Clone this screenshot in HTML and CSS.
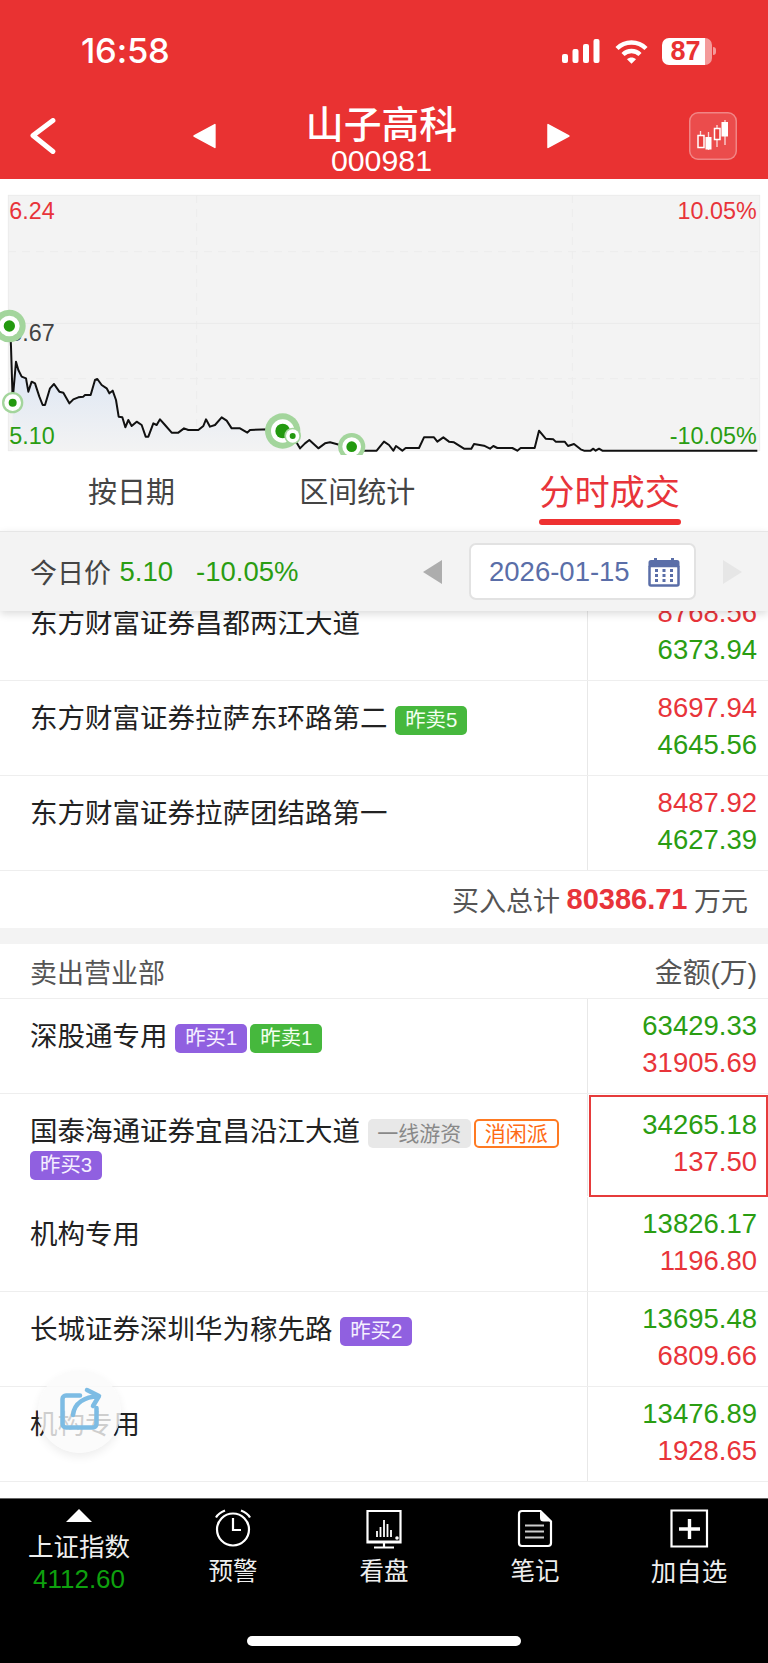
FILE: index.html
```html
<!DOCTYPE html>
<html lang="zh-CN">
<head>
<meta charset="utf-8">
<title>山子高科</title>
<link rel="stylesheet" href="styles.css">
</head>
<body>
<div class="page">
  <header class="header">
    <div class="status">
      <span class="time">16:58</span>
      <div class="status-icons">
        <svg class="signal" width="38" height="24" viewBox="0 0 38 24"><rect x="0" y="15" width="6" height="9" rx="2"/><rect x="10.5" y="10" width="6" height="14" rx="2"/><rect x="21" y="5" width="6" height="19" rx="2"/><rect x="31.5" y="0" width="6" height="24" rx="2"/></svg>
        <svg class="wifi" width="33" height="25" viewBox="0 0 33 25"><path d="M2 9.5C10 1.5 23 1.5 31 9.5" /><path d="M8 15.5C12.800 10.800 20.200 10.800 25 15.500"/><path class="wifi-dot" d="M12 20.300C14.500 17.800 18.500 17.800 21 20.300L16.500 24.800Z"/></svg>
        <div class="battery"><span>87</span></div>
        <i class="battery-nub"></i>
      </div>
    </div>
    <nav class="nav">
      <svg class="back" width="26" height="36" viewBox="0 0 26 36"><path d="M23 2.500L3 17.500 23 33.500"/></svg>
      <svg class="tri tri-left" width="23" height="26" viewBox="0 0 23 26"><path d="M22 1.500V24.500L1 13Z"/></svg>
      <div class="title-block">
        <div class="title">山子高科</div>
        <div class="code">000981</div>
      </div>
      <svg class="tri tri-right" width="23" height="26" viewBox="0 0 23 26"><path d="M1 1.500V24.500L22 13Z"/></svg>
      <div class="kline-btn">
        <svg width="48" height="46" viewBox="0 0 48 46"><path class="wick" d="M11.500 19V36M19.500 20V38M28 13V35M36 8V33"/><rect class="hollow" x="9" y="23.500" width="6" height="12"/><rect class="solid" x="16.500" y="25" width="6" height="12.500"/><rect class="hollow" x="25.500" y="16.500" width="5.500" height="11"/><rect class="solid" x="32.500" y="10" width="6.500" height="14.500"/></svg>
      </div>
    </nav>
  </header>

  <section class="chart">
    <svg width="768" height="276" viewBox="0 -3 2304 828">
      <defs>
        <linearGradient id="fade" x1="0" y1="540" x2="0" y2="812" gradientUnits="userSpaceOnUse">
          <stop offset="0" stop-color="#dbe5f4"/>
          <stop offset="1" stop-color="#f3f3f3"/>
        </linearGradient>
        <clipPath id="clip"><rect x="0" y="-3" width="2304" height="828"/></clipPath>
      </defs>
      <rect class="plot" x="25" y="46" width="2254" height="766"/>
      <path class="grid-dash" d="M24 215H2279M24 596H2279M590 45V812M1717 45V812"/>
      <path class="grid-solid" d="M24 430H2279"/>
      <path class="area" d="M38 812L38 660 48 545 55 570 65 590 78 595 85 635 95 605 105 610 118 650 128 675 135 675 150 625 162 612 178 635 190 638 208 670 220 658 235 652 250 650 255 645 272 645 285 600 292 597 305 615 320 625 328 640 338 632 348 660 356 710 367 712 376 742 385 720 395 738 410 725 425 735 437 770 445 770 460 730 470 735 480 718 495 735 515 758 535 758 552 745 565 750 595 750 610 738 618 718 630 740 645 735 665 712 680 722 695 745 720 745 742 758 750 750 810 748 850 755 878 768 900 805 915 790 928 780 955 805 975 790 990 787 1020 795 1055 800 1085 812Z"/>
      <path class="price" d="M30 440L33 500 38 660 48 545 55 570 65 590 78 595 85 635 95 605 105 610 118 650 128 675 135 675 150 625 162 612 178 635 190 638 208 670 220 658 235 652 250 650 255 645 272 645 285 600 292 597 305 615 320 625 328 640 338 632 348 660 356 710 367 712 376 742 385 720 395 738 410 725 425 735 437 770 445 770 460 730 470 735 480 718 495 735 515 758 535 758 552 745 565 750 595 750 610 738 618 718 630 740 645 735 665 712 680 722 695 745 720 745 742 758 750 750 810 748 850 755 878 768 900 805 915 790 928 780 955 805 975 790 990 787 1020 795 1055 800 1085 812 1130 812 1152 785 1167 795 1180 812 1188 798 1207 812 1217 804 1257 804 1272 772 1302 772 1312 785 1330 772 1347 785 1362 787 1392 806 1414 806 1422 792 1452 797 1470 806 1480 798 1492 804 1537 804 1552 812 1562 804 1604 804 1617 752 1637 776 1660 778 1667 785 1694 785 1704 798 1722 792 1742 808 1752 812 1772 812 1780 806 1787 812 1797 806 1807 812 2272 812"/>
      <text class="lbl red" x="28" y="117">6.24</text>
      <text class="lbl red end" x="2270" y="117">10.05%</text>
      <text class="lbl dark" x="28" y="483">5.67</text>
      <text class="lbl green" x="28" y="793">5.10</text>
      <text class="lbl green end" x="2270" y="793">-10.05%</text>
      <g clip-path="url(#clip)">
        <circle class="halo" cx="28" cy="438" r="49"/><circle class="ring" cx="28" cy="438" r="31"/><circle class="core" cx="28" cy="438" r="17"/>
        <circle class="halo" cx="38" cy="668" r="32"/><circle class="ring" cx="38" cy="668" r="25"/><circle class="core" cx="38" cy="668" r="12"/>
        <circle class="halo" cx="848" cy="753" r="53"/><circle class="ring" cx="848" cy="753" r="35"/><circle class="core" cx="848" cy="753" r="22"/>
        <circle class="halo" cx="878" cy="768" r="25"/><circle class="ring" cx="878" cy="768" r="20"/><circle class="core" cx="878" cy="768" r="9"/>
        <circle class="halo" cx="1055" cy="800" r="41"/><circle class="ring" cx="1055" cy="800" r="28"/><circle class="core" cx="1055" cy="800" r="16"/>
      </g>
    </svg>
  </section>

  <div class="tabs">
    <span class="tab">按日期</span>
    <span class="tab">区间统计</span>
    <span class="tab active">分时成交</span>
  </div>

  <div class="subbar">
    <span class="sub-label">今日价</span>
    <span class="sub-price green-t">5.10</span>
    <span class="sub-pct green-t">-10.05%</span>
    <svg class="arrow-prev" width="21" height="26" viewBox="0 0 21 26"><path d="M20 1V25L1 13Z"/></svg>
    <div class="date-box">
      <span>2026-01-15</span>
      <svg width="32" height="30" viewBox="0 0 32 30"><path class="cal-fill" d="M3 3H6V1H9V3H23V1H26V3H29A2.500 2.500 0 0 1 31.500 5.500V10H.5V5.500A2.500 2.500 0 0 1 3 3Z"/><rect class="cal-body" x="1.500" y="9" width="29" height="19.500" rx="1.500"/><path class="cal-dots" d="M7 13.500H10M14.500 13.500H17.500M22 13.500H25M7 18.500H10M14.500 18.500H17.500M22 18.500H25M7 23.500H10M14.500 23.500H17.500M22 23.500H25"/></svg>
    </div>
    <svg class="arrow-next" width="21" height="26" viewBox="0 0 21 26"><path d="M1 1V25L20 13Z"/></svg>
  </div>

  <main class="list">
    <div class="list-inner">
      <div class="row"><div class="name">东方财富证券昌都两江大道</div><div class="amt"><span class="red-t">8768.56</span><span class="green-t">6373.94</span></div></div>
      <div class="row"><div class="name">东方财富证券拉萨东环路第二 <span class="tag t-green">昨卖5</span></div><div class="amt"><span class="red-t">8697.94</span><span class="green-t">4645.56</span></div></div>
      <div class="row"><div class="name">东方财富证券拉萨团结路第一</div><div class="amt"><span class="red-t">8487.92</span><span class="green-t">4627.39</span></div></div>
      <div class="total">买入总计 <b>80386.71</b> 万元</div>
      <div class="band"></div>
      <div class="head"><span>卖出营业部</span><span class="head-amt">金额(万)</span></div>
      <div class="row"><div class="name">深股通专用 <span class="tag t-purple">昨买1</span><span class="tag t-green">昨卖1</span></div><div class="amt"><span class="green-t">63429.33</span><span class="red-t">31905.69</span></div></div>
      <div class="row row-tall"><div class="name">国泰海通证券宜昌沿江大道 <span class="tag t-gray">一线游资</span><span class="tag t-orange">消闲派</span><span class="tag t-purple">昨买3</span></div><div class="amt hl"><span class="green-t">34265.18</span><span class="red-t">137.50</span></div></div>
      <div class="row"><div class="name">机构专用</div><div class="amt"><span class="green-t">13826.17</span><span class="red-t">1196.80</span></div></div>
      <div class="row"><div class="name">长城证券深圳华为稼先路 <span class="tag t-purple">昨买2</span></div><div class="amt"><span class="green-t">13695.48</span><span class="red-t">6809.66</span></div></div>
      <div class="row"><div class="name">机构专用</div><div class="amt"><span class="green-t">13476.89</span><span class="red-t">1928.65</span></div></div>
    </div>
  </main>

  <div class="fab">
    <svg width="83" height="83" viewBox="0 0 83 83"><path d="M42 25.500H28A3.500 3.500 0 0 0 24.500 29V54A3.500 3.500 0 0 0 28 57.500H55A3.500 3.500 0 0 0 58.500 54V38"/><path d="M35 45C36 33 47 26.500 60 26.500M49 20L61 26 55 36"/></svg>
  </div>

  <footer class="tabbar">
    <div class="tabgrid">
      <div class="tb-item">
        <svg class="index-tri" width="26" height="13" viewBox="0 0 26 13"><path d="M13 0L26 13H0Z"/></svg>
        <div class="index-name">上证指数</div>
        <div class="index-val">4112.60</div>
      </div>
      <div class="tb-item">
        <svg class="tb-icon" width="40" height="40" viewBox="0 0 40 40"><circle cx="20" cy="20.500" r="16"/><path d="M20 9V21H28M3 8.500C5 5 8 3 12 1.500M28 1.500C32 3 35 5 37 8.500"/></svg>
        <div class="tb-label">预警</div>
      </div>
      <div class="tb-item">
        <svg class="tb-icon" width="40" height="40" viewBox="0 0 40 40"><path d="M3.500 2H36.500V33.500H3.500Z"/><path d="M3.500 32.500H36.500M20 34V38M10 38.500H30"/><path class="thin" d="M13 28V22M16.500 28V18M20 28V11M23.500 28V15M27 28V21"/><circle class="fill" cx="33" cy="29" r="1.800"/></svg>
        <div class="tb-label">看盘</div>
      </div>
      <div class="tb-item">
        <svg class="tb-icon" width="40" height="40" viewBox="0 0 40 40"><path d="M7 2H25.500L36 12.500V34A3 3 0 0 1 33 37H7A3 3 0 0 1 4 34V5A3 3 0 0 1 7 2Z"/><path class="fill" d="M25 2.500V9A3.500 3.500 0 0 0 28.500 12.500H35.500Z"/><path class="thin2" d="M10 16.500H29M10 22.500H29M10 28.500H29"/></svg>
        <div class="tb-label">笔记</div>
      </div>
      <div class="tb-item">
        <svg class="tb-icon" width="40" height="40" viewBox="0 0 40 40"><path d="M2.500 1.500H38V37.500H2.500Z"/><path class="plus" d="M20.500 10V30M10 20H31"/></svg>
        <div class="tb-label tb-wide">加自选</div>
      </div>
    </div>
    <div class="home"></div>
  </footer>
</div>
</body>
</html>
```
FILE: styles.css
```css
* { box-sizing: border-box; }
html, body { margin: 0; padding: 0; }
body { background: #fff; font-family: "Liberation Sans", "Noto Sans CJK SC", sans-serif; color: #222; }
.page { position: relative; width: 768px; height: 1663px; overflow: hidden; display: flex; flex-direction: column; }

.header { background: #e93232; height: 179px; flex: none; color: #fff; }
.status { height: 100px; padding: 37px 52px 0 81px; display: flex; justify-content: space-between; align-items: flex-start; }
.time { font-family: Inter, "Liberation Sans", sans-serif; font-size: 34.500px; font-weight: 500; line-height: 28px; letter-spacing: -.2px; }
.status-icons { display: flex; align-items: center; height: 28px; }
.signal { fill: #fff; display: block; }
.wifi { margin-left: 15px; display: block; }
.wifi path { fill: none; stroke: #fff; stroke-width: 4.400; }
.wifi .wifi-dot { fill: #fff; stroke: none; }
.battery { margin-left: 14px; width: 50px; height: 27px; border-radius: 7px; background: linear-gradient(90deg, #fff 0, #fff 86%, #f49a9a 86%, #f49a9a 100%); color: #e93232; font-size: 27px; font-weight: 700; line-height: 27px; text-align: center; padding-right: 3px; }
.battery-nub { display: block; width: 3px; height: 8px; margin-left: 1px; background: #f49a9a; border-radius: 0 3px 3px 0; }

.nav { height: 79px; padding: 0 31px 8px 30px; display: flex; align-items: center; }
.back { fill: none; stroke: #fff; stroke-width: 5; stroke-linecap: round; stroke-linejoin: round; display: block; }
.tri { fill: #fff; stroke: #fff; stroke-width: 1.500; stroke-linejoin: round; display: block; }
.tri-left { margin-left: 137px; }
.title-block { align-self: flex-start; width: 156px; margin-left: 88px; text-align: center; }
.title { font-size: 37.800px; font-weight: 500; line-height: 50px; white-space: nowrap; }
.code { font-size: 30.300px; line-height: 22px; white-space: nowrap; }
.tri-right { margin-left: 88px; }
.kline-btn { margin-left: 119px; width: 48px; height: 48px; border-radius: 9px; background: rgba(255,255,255,.13); box-shadow: inset 0 0 0 1.500px rgba(255,255,255,.32); }
.kline-btn svg { display: block; }
.kline-btn .wick { stroke: #fff; stroke-width: 1.300; fill: none; opacity: .8; }
.kline-btn .hollow { fill: #e9403f; stroke: #fff; stroke-width: 1.500; }
.kline-btn .solid { fill: #fff; }

.chart { height: 276px; flex: none; background: #fff; }
.chart svg { display: block; }
.plot { fill: #f3f3f3; stroke: #ebebeb; stroke-width: 3; }
.grid-dash { fill: none; stroke: #ececec; stroke-width: 3; stroke-dasharray: 24 18; }
.grid-solid { fill: none; stroke: #eaeaea; stroke-width: 3; }
.area { fill: url(#fade); }
.price { fill: none; stroke: #111; stroke-width: 6; stroke-linejoin: round; }
.lbl { font-size: 70px; font-family: "Liberation Sans", sans-serif; }
.lbl.red { fill: #e8343a; }
.lbl.green { fill: #2a9d12; }
.lbl.dark { fill: #444; }
.lbl.end { text-anchor: end; }
.halo { fill: #a3d59c; }
.ring { fill: #fff; }
.core { fill: #23990f; }

.tabs { height: 76px; flex: none; padding: 0 88px; display: flex; justify-content: space-between; align-items: center; background: #fff; }
.tab { font-size: 29px; color: #444; line-height: 40px; white-space: nowrap; }
.tab.active { position: relative; font-size: 35.200px; color: #e8343a; }
.tab.active::after { content: ""; position: absolute; left: 0; right: -1px; top: 46px; height: 6px; border-radius: 3px; background: #ee3030; }

.subbar { position: relative; z-index: 2; height: 80px; flex: none; padding: 0 25px 0 30px; display: flex; align-items: center; background: #f3f3f3; border-top: 1px solid #e6e6e6; box-shadow: 0 3px 8px rgba(0,0,0,.14); font-size: 27.500px; }
.sub-label { color: #444; font-size: 27px; }
.sub-price { margin-left: 8.500px; }
.sub-pct { margin-left: 23px; }
.arrow-prev { margin-left: auto; fill: #adadad; display: block; }
.arrow-next { margin-left: 26px; fill: #e6e6e6; display: block; }
.date-box { margin-left: 26px; width: 227px; height: 57px; padding: 0 14px 0 18px; display: flex; align-items: center; justify-content: space-between; background: #fff; border: 2px solid #e2e2e2; border-radius: 7px; color: #5a6ea8; font-size: 27.500px; }
.date-box svg { display: block; }
.cal-fill { fill: #5a6ea8; }
.cal-body { fill: #fff; stroke: #5a6ea8; stroke-width: 2.500; }
.cal-dots { stroke: #5a6ea8; stroke-width: 3; fill: none; }

.green-t { color: #2a9d12; }
.red-t { color: #e8343a; }

.list { flex: 1; min-height: 0; overflow: hidden; background: #fff; }
.list-inner { margin-top: -25px; }
.row { display: grid; grid-template-columns: 587px 1fr; height: 95px; border-bottom: 1px solid #eee; }
.row-tall { height: 103px; border-bottom-color: transparent; }
.name { padding: 22px 10px 0 30px; font-size: 27.500px; line-height: 32px; color: #222; }
.amt { position: relative; display: flex; flex-direction: column; justify-content: center; align-items: flex-end; padding: 0 11px 3px 0; border-left: 1px solid #e8e8e8; font-size: 27.500px; line-height: 36.500px; }
.amt.hl::after { content: ""; position: absolute; top: 1px; left: 1px; right: 0; bottom: -1px; border: 2px solid #e63b3b; }
.tag { display: inline-block; height: 29px; padding: 0 10px; margin-right: 3px; border-radius: 5px; font-size: 20.400px; line-height: 29px; vertical-align: top; margin-top: 3px; white-space: nowrap; }
.t-green { background: #46b83d; color: #f3fff0; }
.t-purple { background: #9060e0; color: #f5efff; }
.t-gray { background: #e8e8e8; color: #888; font-size: 21px; padding: 0 9.500px; }
.t-orange { background: #fff; color: #ff6a13; border: 2px solid #ff7a22; font-size: 21px; line-height: 25px; padding: 0 9px; }

.total { height: 57px; padding-right: 20px; display: flex; align-items: center; justify-content: flex-end; font-size: 27px; color: #555; white-space: pre; }
.total b { color: #e8343a; font-size: 29px; font-weight: 700; margin: 0 -1px; }
.band { height: 16px; background: #f3f3f3; }
.head { height: 55px; padding: 0 11px 0 30px; display: flex; align-items: center; justify-content: space-between; font-size: 27px; color: #555; border-bottom: 1px solid #eee; }
.head-amt { font-size: 27.900px; }

.fab { position: absolute; left: 38px; top: 1370px; width: 83px; height: 83px; border-radius: 50%; background: rgba(250,250,250,.8); box-shadow: 0 4px 10px rgba(0,0,0,.07); z-index: 3; }
.fab svg { display: block; fill: none; stroke: #7dbce4; stroke-width: 4.500; stroke-linecap: round; stroke-linejoin: round; }

.tabbar { height: 165px; flex: none; background: #000; border-top: 1px solid #666; color: #eee; }
.tabgrid { height: 137px; padding-top: 10px; display: grid; grid-template-columns: 158px 150px 152px 150px 158px; align-items: start; }
.tb-item { display: flex; flex-direction: column; align-items: center; }
.index-tri { fill: #fff; display: block; margin-bottom: 10px; }
.index-name { font-size: 25.500px; line-height: 30px; white-space: nowrap; }
.index-val { font-size: 26px; line-height: 32px; margin-top: 1px; color: #0ea00e; }
.tb-icon { display: block; fill: none; stroke: #fff; stroke-width: 2.200; }
.tb-icon .thin { stroke-width: 1.800; }
.tb-icon .thin2 { stroke-width: 2; stroke: #ccc; }
.tb-icon .fill { fill: #fff; stroke: none; }
.tb-icon .plus { stroke-width: 3.400; }
.tb-label { margin-top: 8px; font-size: 24.500px; line-height: 30px; white-space: nowrap; }
.tb-wide { font-size: 25.500px; }
.home { width: 274px; height: 10px; margin: 0 auto; border-radius: 5px; background: #fff; }
```
